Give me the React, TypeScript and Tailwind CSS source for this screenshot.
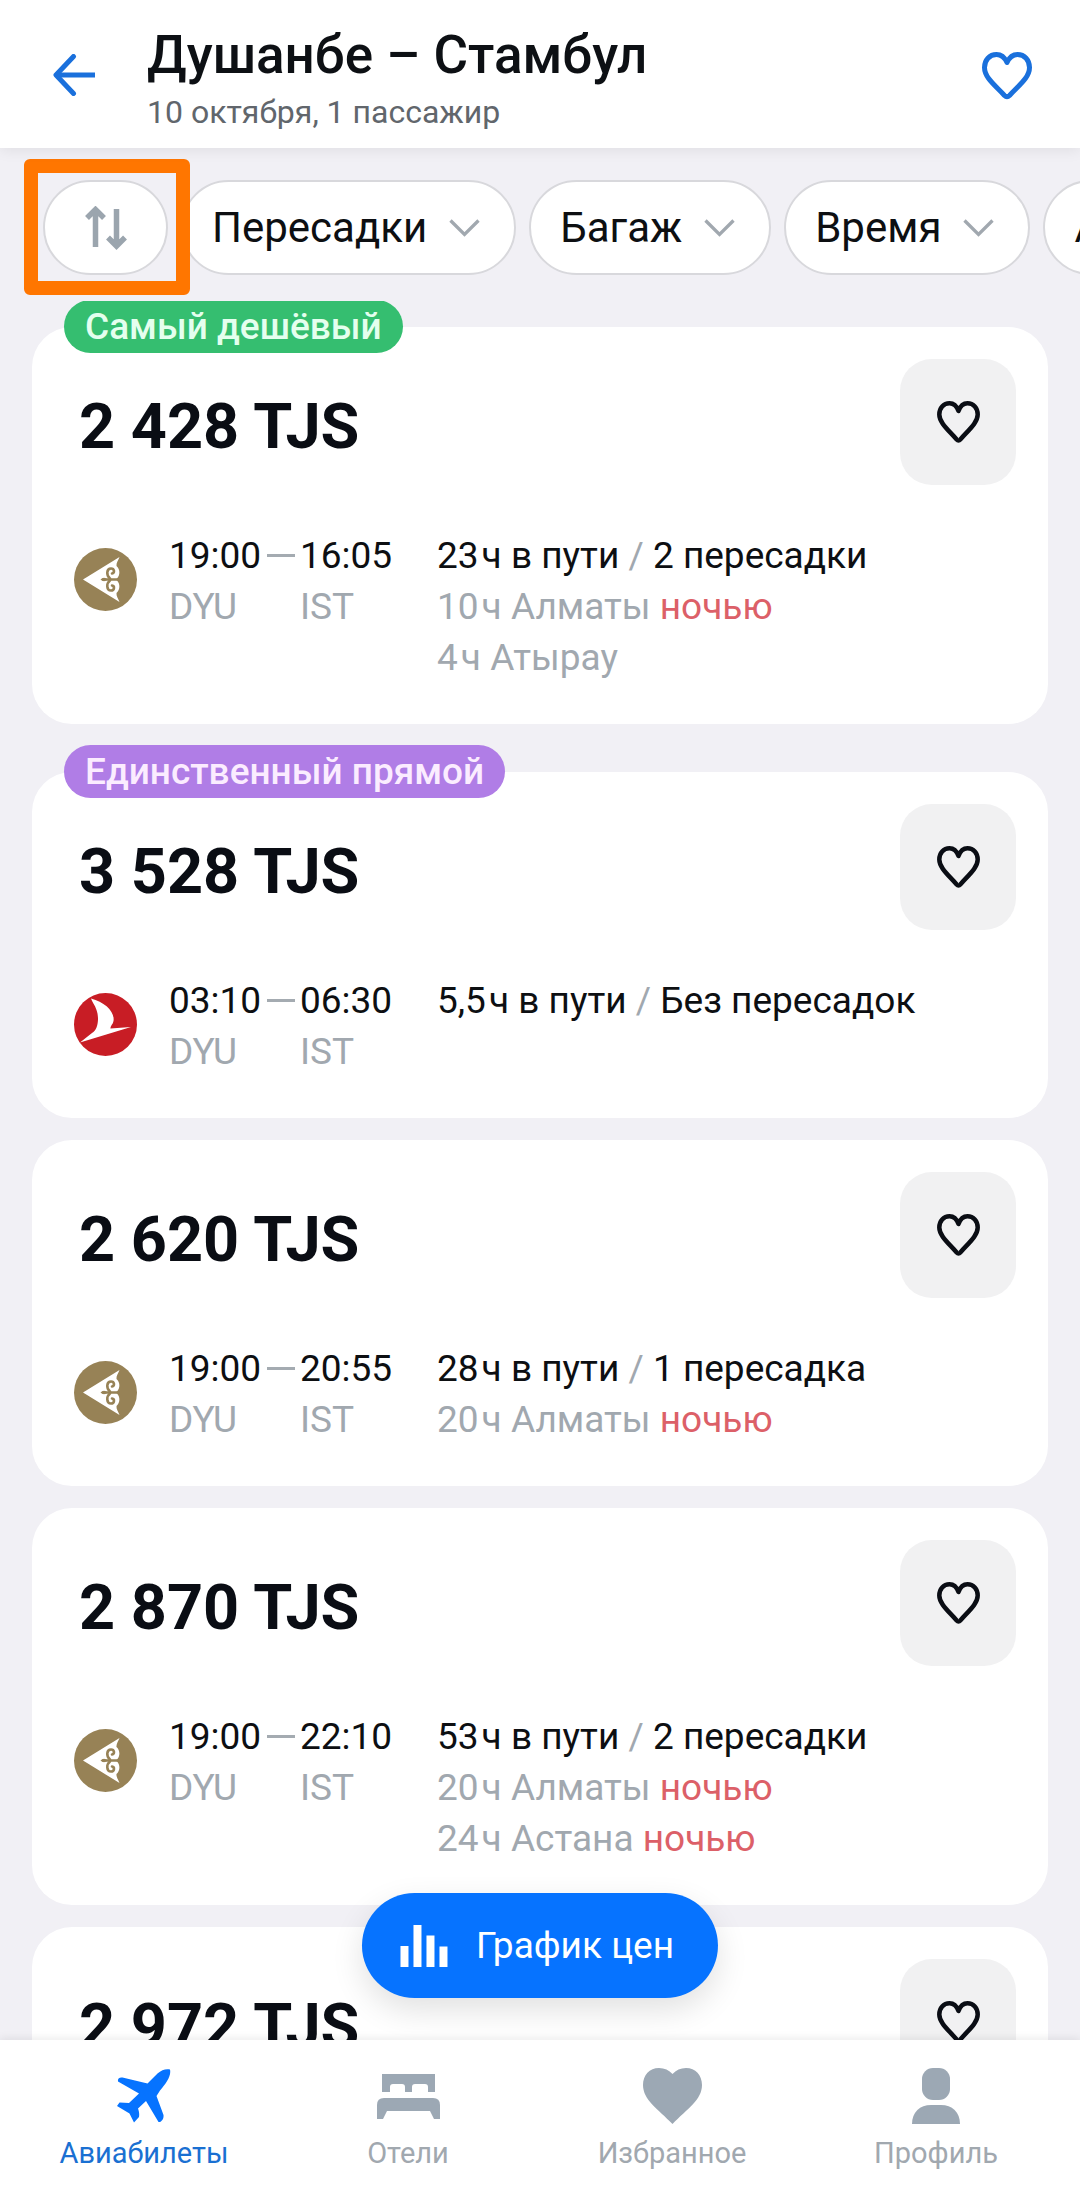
import { useState } from "react";

type Stop = {
  hours: string;
  city: string;
  night?: boolean;
};

type Ticket = {
  id: string;
  price: string;
  airline: "astana" | "turkish";
  depart: string;
  arrive: string;
  duration: string;
  transfers: string;
  stops: Stop[];
  badge?: { label: string; className: string };
};

const TICKETS: Ticket[] = [
  {
    id: "t1",
    price: "2 428 TJS",
    airline: "astana",
    depart: "19:00",
    arrive: "16:05",
    duration: "23",
    transfers: "2 пересадки",
    stops: [
      { hours: "10", city: "Алматы", night: true },
      { hours: "4", city: "Атырау" },
    ],
    badge: { label: "Самый дешёвый", className: "bg-[#35be70] text-[#e4ffee]" },
  },
  {
    id: "t2",
    price: "3 528 TJS",
    airline: "turkish",
    depart: "03:10",
    arrive: "06:30",
    duration: "5,5",
    transfers: "Без пересадок",
    stops: [],
    badge: { label: "Единственный прямой", className: "bg-[#b07de6] text-[#fbecff]" },
  },
  {
    id: "t3",
    price: "2 620 TJS",
    airline: "astana",
    depart: "19:00",
    arrive: "20:55",
    duration: "28",
    transfers: "1 пересадка",
    stops: [{ hours: "20", city: "Алматы", night: true }],
  },
  {
    id: "t4",
    price: "2 870 TJS",
    airline: "astana",
    depart: "19:00",
    arrive: "22:10",
    duration: "53",
    transfers: "2 пересадки",
    stops: [
      { hours: "20", city: "Алматы", night: true },
      { hours: "24", city: "Астана", night: true },
    ],
  },
  {
    id: "t5",
    price: "2 972 TJS",
    airline: "astana",
    depart: "",
    arrive: "",
    duration: "",
    transfers: "",
    stops: [],
  },
];

const FILTERS = ["Пересадки", "Багаж", "Время", "Авиакомпании"];

const TABS = [
  { id: "flights", label: "Авиабилеты", Icon: PlaneIcon },
  { id: "hotels", label: "Отели", Icon: BedIcon },
  { id: "favorites", label: "Избранное", Icon: HeartSolidIcon },
  { id: "profile", label: "Профиль", Icon: ProfileIcon },
];

function BackIcon() {
  return (
    <svg width="42" height="42" viewBox="0 0 42 42" fill="none" stroke="currentColor" strokeWidth="5" strokeLinecap="round" strokeLinejoin="round">
      <path d="M20.5 2.5 3 21l17.5 18.5" />
      <path d="M4 21h38" strokeLinecap="butt" />
    </svg>
  );
}

function HeaderHeartIcon() {
  return (
    <svg width="50" height="48" viewBox="0 0 50 48" fill="none" stroke="currentColor" strokeWidth="5" strokeLinejoin="round">
      <path d="M25 10.5C22.5 5 18.500 2.500 14.500 2.500 7.500 2.500 2.500 8 2.500 15.500 2.500 26 14 34 22.500 43.500Q25 46 27.500 43.500C36 34 47.500 26 47.500 15.500 47.500 8 42.500 2.500 35.500 2.500 31.500 2.500 27.500 5 25 10.500Z" />
    </svg>
  );
}

function HeartIcon() {
  return (
    <svg width="43" height="42" viewBox="0 0 43 42" fill="none" stroke="currentColor" strokeWidth="4.500" strokeLinejoin="round">
      <path d="M21.500 10C19.500 4.500 16 2.300 12.500 2.300 6.500 2.300 2.300 7 2.300 13.500 2.300 22 12 29.500 19.700 38.500Q21.500 40.500 23.300 38.500C31 29.500 40.700 22 40.700 13.500 40.700 7 36.500 2.300 30.500 2.300 27 2.300 23.500 4.500 21.500 10Z" />
    </svg>
  );
}

function SortIcon() {
  return (
    <svg width="42" height="44" viewBox="0 0 42 44" fill="none" stroke="currentColor" strokeWidth="5.500">
      <path d="M10.500 41V4M2 12l8.500-8.500L19 12" />
      <path d="M31.500 3v37M23 31.500l8.500 8.500 8.500-8.500" />
    </svg>
  );
}

function ChevronIcon() {
  return (
    <svg width="31" height="18" viewBox="0 0 31 18" fill="none" stroke="currentColor" strokeWidth="3.300">
      <path d="m1.500 1.500 14 14 14-14" />
    </svg>
  );
}

function ChartIcon() {
  return (
    <svg width="48" height="42" viewBox="0 0 48 42" fill="currentColor">
      <path d="M.5 21h8v21h-8zM13.500 0h8v42h-8zM26.500 10.500h8v31.500h-8zM39.500 21.500h8v20.500h-8z" />
    </svg>
  );
}

function PlaneIcon() {
  return (
    <svg width="54" height="54" viewBox="0 0 54 54" fill="currentColor">
      <path d="M53 .5C54.500 7 49 14.500 43 21.500L39.500 27 46.500 46C47 50 44 53.500 41.500 53L29 32 21 39.500C22 42 22.500 45 22 48L17 53.500 12.500 44.500 0 37 2.500 33.500 12 34 22 24.500 1 12.500C.5 9.500 2.500 8 5.500 8.500L30.500 14.500 40.500 4.500C44.500 1 49-.5 53 .5Z" />
    </svg>
  );
}

function BedIcon() {
  return (
    <svg width="63" height="45" viewBox="0 0 63 45" fill="currentColor">
      <path d="M5 0h53v18h-7v-5q0-3-3-3H38q-3 0-3 3v5h-7v-5q0-3-3-3H16q-3 0-3 3v5H5z" />
      <path d="M7 24h49q7 0 7 7v14h-6l-4-8H10l-4 8H0V31q0-7 7-7z" />
    </svg>
  );
}

function HeartSolidIcon() {
  return (
    <svg width="59" height="56" viewBox="0 0 59 56" fill="currentColor">
      <path d="M29.500 6C26 2 21.500 0 16 0 6.500 0 0 7 0 17 0 32 15 41 29.500 56 44 41 59 32 59 17 59 7 52.500 0 43 0 37.500 0 33 2 29.500 6Z" />
    </svg>
  );
}

function ProfileIcon() {
  return (
    <svg width="48" height="56" viewBox="0 0 48 56" fill="currentColor">
      <rect x="10" width="28" height="32" rx="11" />
      <path d="M0 56C0 44 8 37 19 37h10c11 0 19 7 19 19z" />
    </svg>
  );
}

function AirlineLogo({ airline }: { airline: Ticket["airline"] }) {
  if (airline === "turkish") {
    return (
      <svg className="shrink-0" width="63" height="63" viewBox="0 0 63 63" role="img" aria-label="Turkish Airlines">
        <circle cx="31.500" cy="31.500" r="31.500" fill="#c81d25" />
        <path d="M17 5.500C31 9 41 19 39.500 28 39 31.500 36 33 36.500 35.500L57 34 6 49.500 18 40C24 37 25.500 25 22.500 17 21 12 18 9 17 5.500Z" fill="#fff" />
      </svg>
    );
  }
  return (
    <svg className="shrink-0" width="63" height="63" viewBox="0 0 63 63" role="img" aria-label="Air Astana">
      <circle cx="31.500" cy="31.500" r="31.500" fill="#978256" />
      <path d="M9 31.500 45.500 9C44.500 12 42 15 42.500 18 46 21 46.500 27 43 30.500L41.500 31.500 43 32.500C46.500 36 46 42 42.500 45 42 48 44.500 51 45.500 54Z" fill="#fff" />
      <g fill="none" stroke="#978256" strokeWidth="2.600" strokeLinecap="round">
        <path d="M44 31.500H29" />
        <path d="M36 30.500C32 27.500 32.500 20.500 37 20.500 40.500 20.500 41 25 38 25.500" />
        <path d="M36 32.500C32 35.500 32.500 42.500 37 42.500 40.500 42.500 41 38 38 37.500" />
      </g>
      <path d="M26.500 31.500q3.500-3.500 7 0-3.500 3.500-7 0Z" fill="#978256" />
    </svg>
  );
}

function TicketCard({ ticket }: { ticket: Ticket }) {
  const [liked, setLiked] = useState(false);

  return (
    <article className={`relative shrink-0 rounded-[40px] bg-white pt-8 pr-8 pb-[41px] pl-[42px] ${ticket.badge ? "mt-[26px]" : ""}`}>
      {ticket.badge && (
        <span className={`absolute -top-[27px] left-8 flex h-[53px] items-center rounded-full px-[21px] text-[37px] leading-none font-medium ${ticket.badge.className}`}>
          {ticket.badge.label}
        </span>
      )}
      <div className="flex items-center justify-between">
        <h2 className="pt-2 pl-[5px] text-[63px] leading-[75px] font-bold text-[#0a0d14]">{ticket.price}</h2>
        <button
          type="button"
          aria-label="В избранное"
          aria-pressed={liked}
          onClick={() => setLiked(!liked)}
          className="flex h-[126px] w-[116px] items-center justify-center rounded-[32px] bg-[#f1f1f2] text-[#0a0d14]"
        >
          <HeartIcon />
        </button>
      </div>
      {ticket.depart && (
        <div className="mt-[45px] flex items-start text-[37px] leading-[51px] text-[#0d0f12]">
          <div className="mt-[18px] mr-8">
            <AirlineLogo airline={ticket.airline} />
          </div>
          <div className="w-[131px] shrink-0">
            <div className="flex items-center">
              {ticket.depart}
              <span className="ml-[6px] h-[3px] w-7 bg-[#a4abb1]" />
            </div>
            <div className="text-[#a1a8af]">DYU</div>
          </div>
          <div className="w-[137px] shrink-0">
            <div>{ticket.arrive}</div>
            <div className="text-[#a1a8af]">IST</div>
          </div>
          <div className="min-w-0 whitespace-nowrap">
            <p>
              {ticket.duration}
              <span className="ml-[3px]">ч</span> в пути <span className="text-[#a1a8af]">/</span> {ticket.transfers}
            </p>
            {ticket.stops.map((stop) => (
              <p key={stop.city} className="text-[#a1a8af]">
                {stop.hours}
                <span className="ml-[3px]">ч</span> {stop.city}
                {stop.night && <span className="text-[#dc6068]"> ночью</span>}
              </p>
            ))}
          </div>
        </div>
      )}
    </article>
  );
}

export default function App() {
  const [tab, setTab] = useState("flights");

  return (
    <div className="flex h-screen flex-col overflow-hidden bg-[#f1f0f5] font-[Roboto,sans-serif] text-[#0d0f12]">
      <header className="relative z-10 flex shrink-0 items-start bg-white pt-6 pr-12 pb-[18px] pl-[53px] shadow-[0_2px_14px_rgba(0,0,0,0.08)]">
        <button type="button" aria-label="Назад" className="mt-[30px] text-[#1a70dc]">
          <BackIcon />
        </button>
        <div className="ml-[52px] flex-1">
          <h1 className="text-[53px] leading-[62px] font-medium text-[#0d1014]">Душанбе – Стамбул</h1>
          <p className="mt-2 text-[32px] leading-9 text-[#61666c]">10 октября, 1 пассажир</p>
        </div>
        <button type="button" aria-label="Избранное" className="mt-7 text-[#1a70dc]">
          <HeaderHeartIcon />
        </button>
      </header>

      <div className="relative shrink-0">
        <div className="flex gap-[13px] overflow-x-auto pt-8 pb-[26px] pl-[43px] [scrollbar-width:none]">
          <button
            type="button"
            aria-label="Сортировка"
            className="flex h-[95px] w-[125px] shrink-0 items-center justify-center rounded-full border-2 border-[#d8d8dc] bg-white text-[#9ba5ae]"
          >
            <SortIcon />
          </button>
          {FILTERS.map((name) => (
            <button
              key={name}
              type="button"
              className="flex h-[95px] shrink-0 items-center gap-[22px] rounded-full border-2 border-[#d8d8dc] bg-white pr-[34px] pl-[29px] text-[42px] leading-none text-[#0d0f12]"
            >
              {name}
              <span className="text-[#a1a8af]">
                <ChevronIcon />
              </span>
            </button>
          ))}
        </div>
        <div className="pointer-events-none absolute top-[11px] left-6 h-[136px] w-[166px] rounded-md border-[14px] border-[#ff7600]" />
      </div>

      <div className="relative min-h-0 flex-1">
        <main className="flex h-full flex-col gap-[22px] overflow-y-auto px-8 [scrollbar-width:none]">
          {TICKETS.map((ticket) => (
            <TicketCard key={ticket.id} ticket={ticket} />
          ))}
        </main>
        <button
          type="button"
          className="absolute bottom-[42px] left-1/2 flex h-[105px] -translate-x-1/2 items-center gap-7 rounded-full bg-[#0673ff] pr-11 pl-[38px] text-[37px] leading-none whitespace-nowrap text-white shadow-[0_12px_32px_rgba(0,0,0,0.12)]"
        >
          <ChartIcon />
          График цен
        </button>
      </div>

      <nav className="relative flex shrink-0 bg-white px-3 pt-[26px] pb-[17px] shadow-[0_-2px_8px_rgba(0,0,0,0.08)]">
        {TABS.map(({ id, label, Icon }) => (
          <button
            key={id}
            type="button"
            onClick={() => setTab(id)}
            className={`flex flex-1 flex-col items-center text-[29px] leading-[34px] ${tab === id ? "text-[#1a70d2]" : "text-[#a1a8af]"}`}
          >
            <span className={`flex h-[60px] items-center ${tab === id ? "text-[#0673ff]" : "text-[#9ca8b4]"}`}>
              <Icon />
            </span>
            <span className="mt-[10px]">{label}</span>
          </button>
        ))}
      </nav>
    </div>
  );
}
